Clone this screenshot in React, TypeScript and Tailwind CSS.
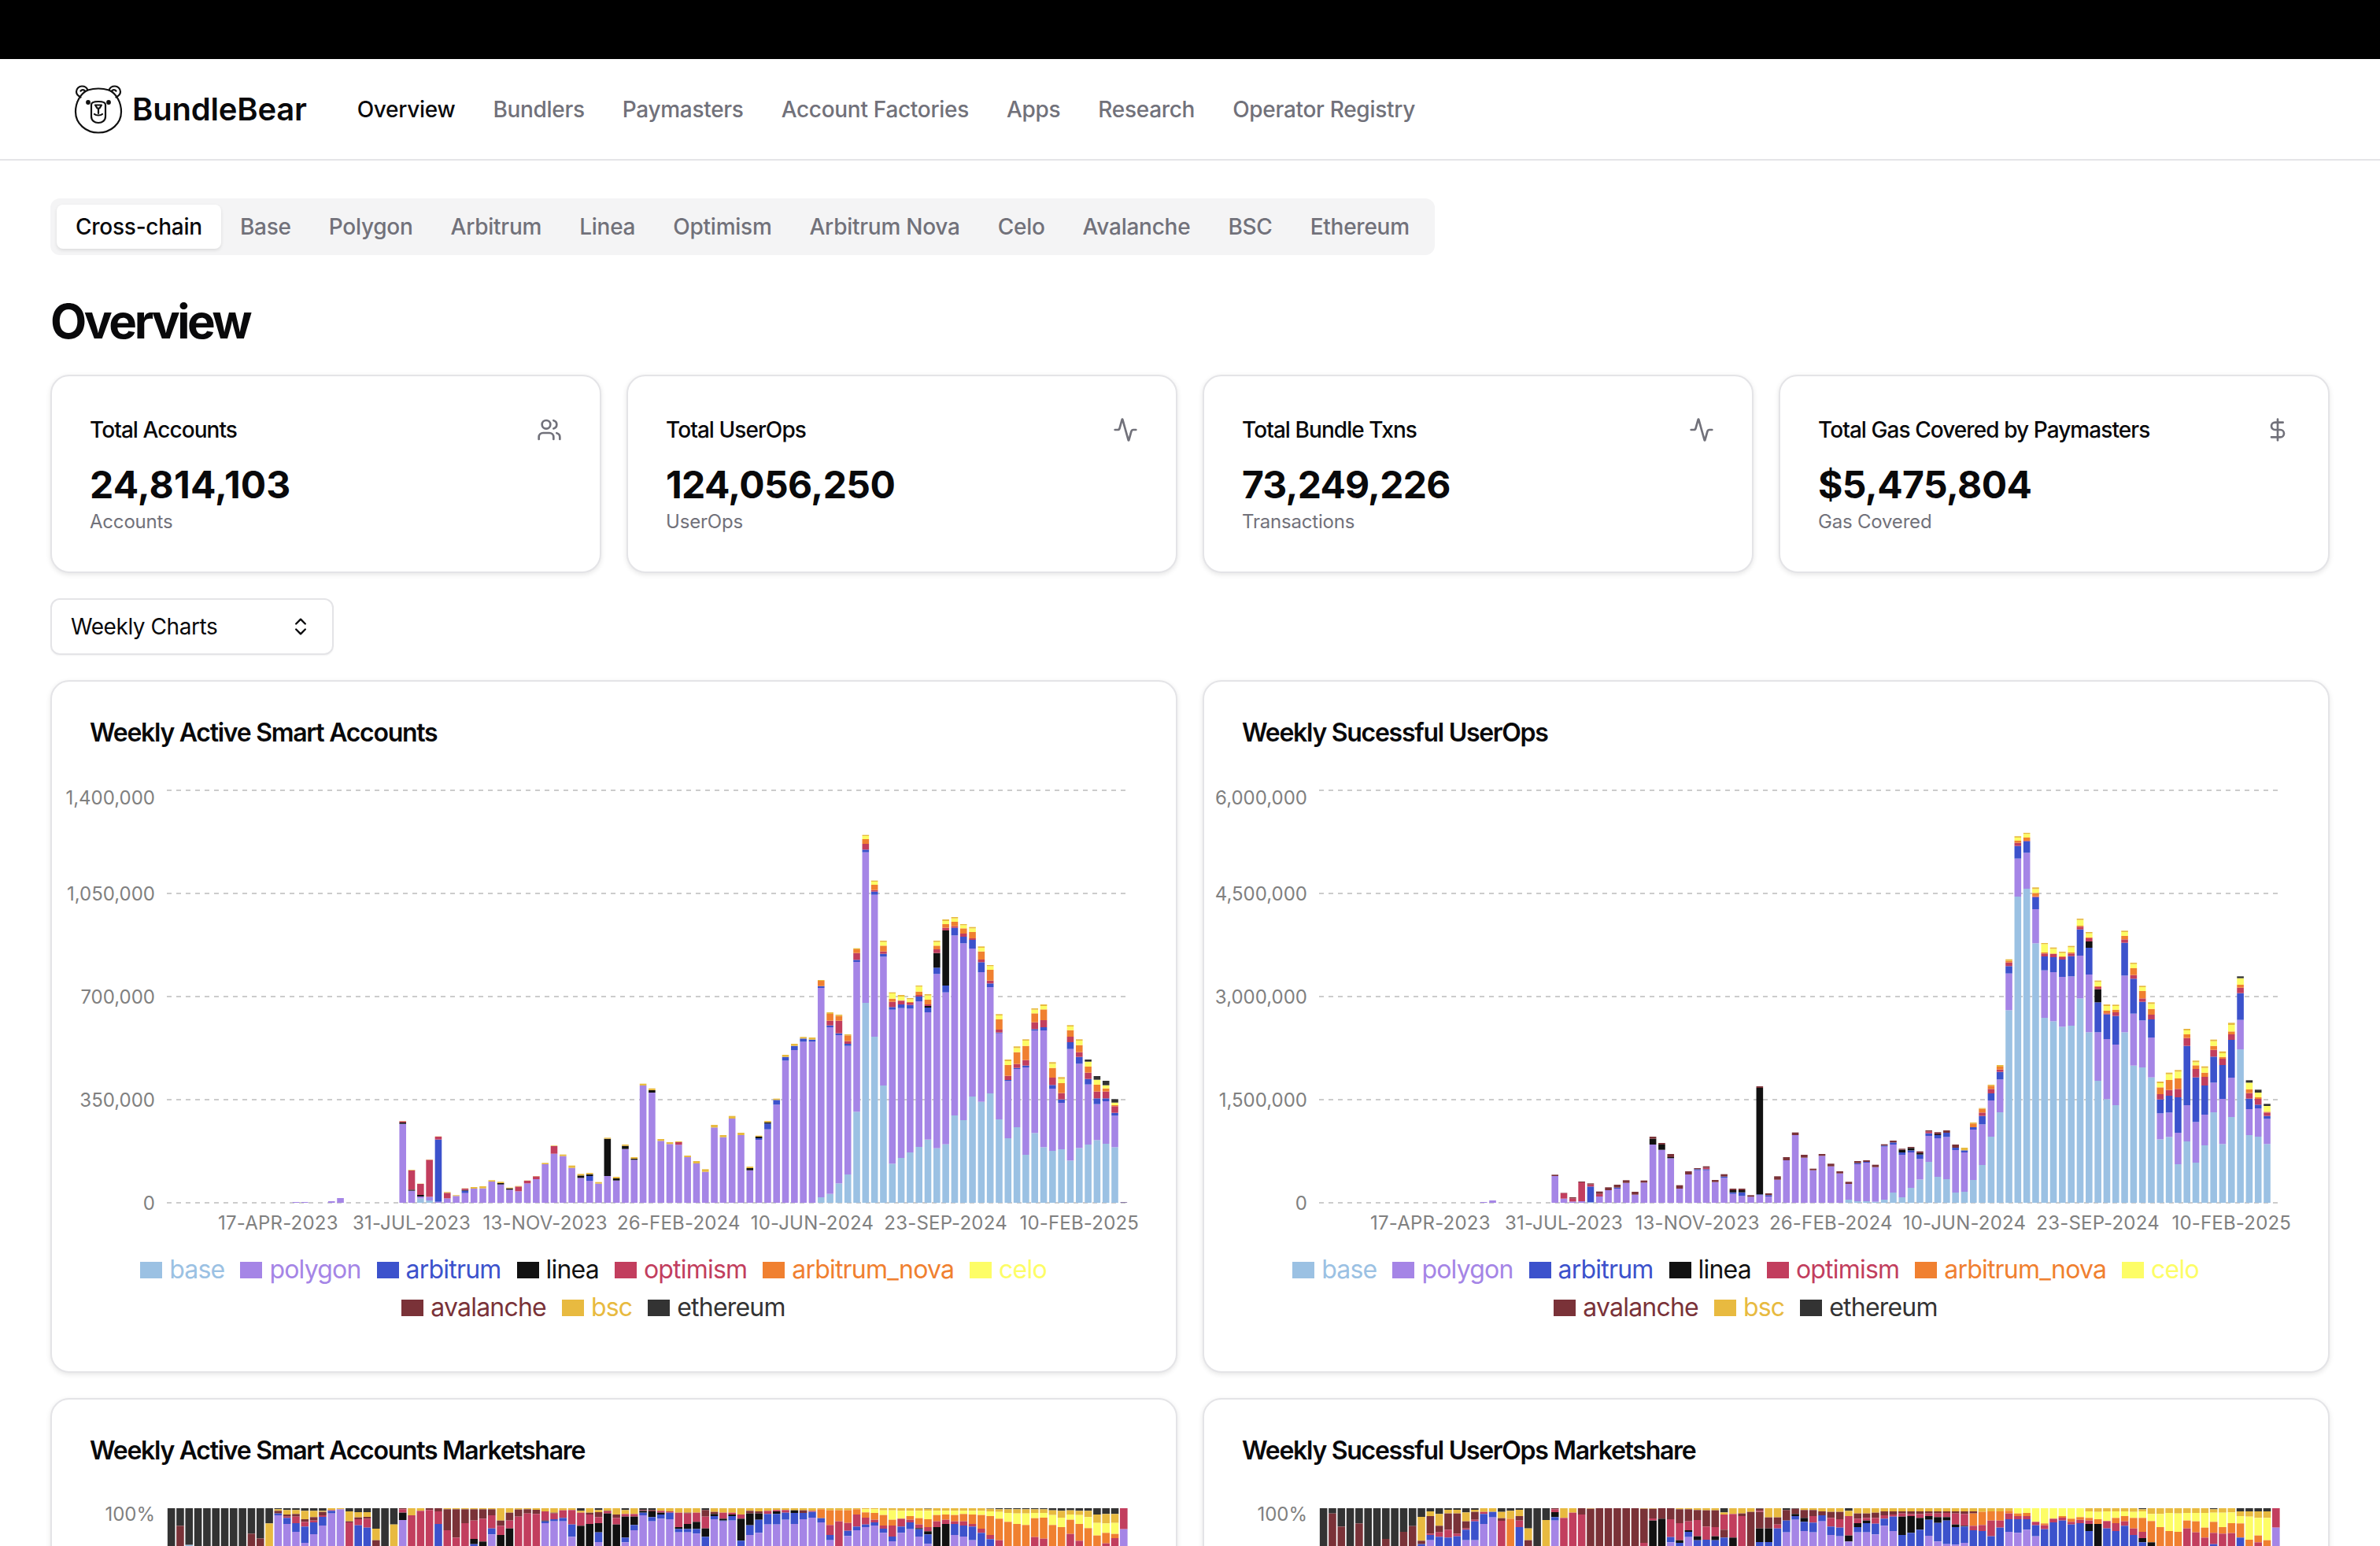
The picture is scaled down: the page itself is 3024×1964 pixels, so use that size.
import React from 'react';
import { Users, Activity, DollarSign, ChevronsUpDown } from 'lucide-react';

const COLORS: Record<string, string> = {
  b: '#9bc1e3',
  p: '#a585e6',
  a: '#3c52cc',
  l: '#111111',
  o: '#c23e5e',
  n: '#f08030',
  c: '#fdfd66',
  v: '#7a3238',
  s: '#e8ba40',
  e: '#333333',
};

const LEGEND = [
  [['base', 'b'], ['polygon', 'p'], ['arbitrum', 'a'], ['linea', 'l'], ['optimism', 'o'], ['arbitrum_nova', 'n'], ['celo', 'c']],
  [['avalanche', 'v'], ['bsc', 's'], ['ethereum', 'e']],
];

const navItems = ['Overview', 'Bundlers', 'Paymasters', 'Account Factories', 'Apps', 'Research', 'Operator Registry'];
const chains = ['Cross-chain', 'Base', 'Polygon', 'Arbitrum', 'Linea', 'Optimism', 'Arbitrum Nova', 'Celo', 'Avalanche', 'BSC', 'Ethereum'];
const xLabels = ['17-APR-2023', '31-JUL-2023', '13-NOV-2023', '26-FEB-2024', '10-JUN-2024', '23-SEP-2024', '10-FEB-2025'];

const stats = [
  { title: 'Total Accounts', value: '24,814,103', sub: 'Accounts', icon: Users, tracking: 'tracking-[0.2px]' },
  { title: 'Total UserOps', value: '124,056,250', sub: 'UserOps', icon: Activity, tracking: 'tracking-[-0.6px]' },
  { title: 'Total Bundle Txns', value: '73,249,226', sub: 'Transactions', icon: Activity, tracking: 'tracking-[-0.8px]' },
  { title: 'Total Gas Covered by Paymasters', value: '$5,475,804', sub: 'Gas Covered', icon: DollarSign, tracking: 'tracking-[-0.6px]' },
];

// rows are tops read off the chart: [poly, top], [poly, linea, top], or [base, poly, arb, linea, opt, nova, celo, top]. 0 = no segment
const accounts: number[][] = [
  [0,1163,0,1158,1153,0,0,1152],[0,1418,0,1414,1340,0,0,1338],[1447,1440,0,1434,1392,0,0,1391],[1455,1441,0,0,1300,0,0,1299],
  [0,1460,1223,0,1212,0,0,1211],[0,1447,0,0,1426,0,0,1423],[1438,1435],[0,1427,1418,1415,1410,0,0,1409],
  [1410,1404],[1409,1401],[1383,1378],[1394,1389,1384],[1414,1409,1406],[0,1420,0,0,1402,0,0,1400],[0,1390,0,0,1380,0,0,1379],
  [0,1374,0,0,1363,0,0,1362],[1317,1312],[0,1277,0,0,1248,0,0,1246],[1286,1280],[1331,1322],[1369,1360,1354],
  [0,1380,1362,1355,0,0,0,1350],[1391,1385],[1362,1220,1216],[1379,1371,1365],[1259,1247,1242],[1300,1296,1290],
  [1017,1010],[1044,1035,1028],[1228,1221],[1240,1233],[0,1243,0,0,1233,0,0,1230],[1290,1284],[1314,1305],[1346,1336],
  [1177,1167],[1214,1206],[1143,1133],[1206,1197],[1340,1332,1326],[0,1224,1218,1212,0,0,0,1208],[0,1184,1162,1157,0,0,0,1152],
  [0,1090,1072,0,0,0,0,1067],[0,922,908,0,0,0,0,900],[0,882,866,0,0,0,0,858],[0,850,838,0,0,0,0,832],[0,850,842,0,0,0,0,834],
  [1443,645,638,0,0,618,0,615],[1430,795,788,0,770,744,0,738],[1390,825,818,0,770,752,0,747],[1356,866,858,0,848,826,0,822],
  [1117,546,538,0,512,498,0,494],[702,128,118,0,96,78,66,62],[831,290,278,0,272,252,240,236],[1017,526,515,0,506,484,470,465],
  [1315,728,718,0,698,686,666,662],[1293,722,708,0,694,692,678,672],[1272,724,710,0,702,698,688,684],[1251,696,678,0,672,659,640,636],
  [1223,738,720,714,708,690,674,669],[1256,592,568,512,498,484,470,465],[1241,662,636,426,416,402,390,384],[1131,445,416,0,410,393,380,375],
  [1149,475,450,0,438,418,406,402],[1059,495,462,0,456,432,418,413],[1079,585,547,0,537,506,492,487],[1047,642,628,0,617,576,562,558],
  [1146,818,815,0,804,765,750,745],[1218,1000,996,0,980,939,924,918],[1176,954,950,0,935,890,874,868],[1281,948,941,0,920,866,846,841],
  [1198,808,802,0,776,742,728,723],[1252,807,795,0,768,727,714,708],[1266,1029,1015,0,987,950,934,928],[1260,1083,1070,0,1046,1008,992,985],
  [1303,878,852,0,831,806,792,787],[1255,934,908,0,890,863,846,841],[1242,1013,992,0,968,945,926,918],[1225,1088,1066,0,1040,1014,995,981],
  [1239,1077,1066,0,1040,1028,1016,999],[1252,1132,1121,0,1096,1092,1082,1069],[1462,1461],
];

const userOps: number[][] = [
  [1362,1357],[0,1448,0,0,1427,0,0,1426],[0,1459,0,0,1447,0,0,1443],[0,1458,0,0,1386,0,0,1383],[1462,0,1402,0,1394,0,0,1390],
  [0,1440,0,0,1430,0,0,1421],[1416,1405],[0,1410,1406,0,0,0,0,1395],[1388,1378],[1433,1422],[1387,1379],[1242,1220,1212],[1262,1242,1236],
  [1294,1290,1278],[1410,1397],[1356,1344],[0,1340,1336,0,0,0,0,1332],[0,1340,1336,0,1330,0,0,1325],[1385,1377],[0,1369,1364,0,0,0,0,1355],
  [0,1430,1424,1416,0,0,0,1410],[0,1438,1424,1416,0,0,0,1410],[1441,1435],[0,1435,1432,1026,0,0,0,1020],[0,1440,1435,0,0,0,0,1428],
  [1376,1363],[1302,1290],[1206,1196],[1292,1281],[1340,1334],[1285,1278],[1325,1315],[1352,1344],[1452,1392,0,0,0,0,0,1384],
  [1458,1317,1313,0,0,0,0,1305],[1458,1311,1308,0,0,0,0,1302],[1460,1328,0,0,0,0,0,1319],[1452,1250,1246,0,0,0,0,1241],[1425,1242,1234,0,0,0,0,1227],
  [1443,1281,1272,1262,0,0,0,1258],[1407,1272,1264,1255,0,0,0,1251],[1375,1297,1280,1275,0,0,0,1268],[1308,1209,1199,0,1192,0,0,1188],
  [1365,1218,1206,1203,0,0,0,1195],[1374,1213,1197,0,0,0,0,1188],[1425,1263,1254,0,0,0,0,1242],[1422,1272,1264,0,0,0,0,1254],
  [1377,1185,1176,0,0,1162,0,1158],[1320,1165,1133,0,1120,1106,0,1103],[1212,1074,1047,0,1030,1018,0,1014],[1119,994,965,0,956,945,0,939],
  [730,590,562,0,548,542,0,536],[297,152,104,0,92,84,72,67],[267,130,86,0,84,72,58,54],[475,345,299,0,296,283,268,262],
  [759,578,525,0,514,510,478,474],[772,585,528,0,516,514,496,491],[793,603,537,0,528,525,512,507],[789,601,524,0,514,510,490,485],
  [685,522,422,0,412,408,386,381],[814,594,492,468,456,452,437,432],[999,814,700,650,642,638,622,617],[1069,840,746,0,742,732,714,708],
  [1092,861,752,0,738,728,714,709],[814,598,473,0,460,447,432,427],[941,743,610,0,596,570,554,549],[948,769,698,0,685,657,642,637],
  [986,834,765,0,747,725,706,700],[1222,1123,1070,0,1050,1024,1008,1002],[1213,1120,1056,0,1034,996,974,968],[1317,1197,1062,0,1030,990,964,958],
  [1230,1092,866,0,836,822,807,801],[1311,1156,986,0,954,940,928,922],[1245,1128,1017,0,984,968,950,944],[1119,1006,907,0,881,866,848,842],
  [1240,1068,939,0,915,908,894,887],[1137,987,843,0,822,811,786,778],[879,767,665,0,644,633,608,601],[1206,1107,1067,0,1046,1032,1006,997],
  [1212,1104,1090,0,1068,1062,1044,1033],[1240,1144,1133,0,1120,1117,1095,1087],
];

// top-down segments of the marketshare columns: colour letter + y where it ends (48..192 in crop units)
const share1 = [
  'e','e115v','e188b','e','e','e','e','e','e','e145v','e163v','e106s','e52s58v68a75p','e55s72v80o85a108p','e55s70v80o105a138p','e58s90v100o118a180p',
  'e58s82v95o102a147p','e58s62v75o81a114p','s55o58a68p','s52p','e60s98v102o','e63s83v90o113a','e63s81v88o122a','e126s170v','e','e110s',
  'v52o65l93p','s75o','s58o','v55o','v60o108a','s52v132o','s52v160o','s52v105o','s52v95o165l185a','s52v88o175l','s52v75o125a148p','s95v115o150l',
  's65v95o125l','s53v80o','s52v68o','s54v70o','s60o95l98a105p','s65v68o90a98p','s56o85a98p','s55o110a157p','e58s65o115l','s65v72o108l',
  'e55s63v82o105l140a177p','s58v60o68l','s72v85o110l','e55s70o80l160a178p','s70o80l112a132p','e55o58l65a75p','e55v60l82a98p','s58o65l72a88p','s60o65a90p',
  's65o120l127a140p','s65v68o108l127a140p','s65o100l127a145p','e55v80o125l157a','s62v70l78a90p','s65o88l95a98p','s65o72l78a95p','s72o88l172a',
  's58v68l113a150p','s60v68l92a142p','s58o70a110p','s55o60l70a110p','s55o65a92p','s56l66a108p','s56v66a90p','s58o62a84p','s52n86a102p','s56n112o150a170p',
  's56n98o','s56n104o134a154p','s52n72o118a132p','s52c64n84o110a120p','s52c66n92o102a114p','s56c74n114o126a142p','s56c92n114o156a174p','s58c88o118a142p',
  's58c78n92o102a128p','s58c86n110o124l128a156p','e50s58c90n120o136l148a184p','s58c74n98o120l','s58c72n92o108l','s58c74n98o108a150p','s58c70n98o114a156p',
  's58c72n108o118a170p','s58c74n126o142a','e50s60c78n150o166a','e52s62c88n170o','e52s66c100n','e52s68c108n','e52s68c112n','e52s66c86n158o','e52s66c84n164o',
  'e56s74c112n','e58s84c120n','e56s72c92n146o','e58s74c108n172o','e58s82c124n','e72s104c152n','e70s106c142n182o','e70s104c146n162o','o128p',
];

const share2 = [
  'e','e68v','e118v','e','e106v','e','e','e165v','e','e138v','e116v','e81s172v185a','e60s78v145o150a170p','e70s115v140o157a','e54s68v130o160a','e54s68v145o155a',
  'e64s98v125o130a170p','e54s62v92o98a170p','s62o70a108p','s62a83p','e62s86v96o','e58s88n','e54s78v95o120a','e125s170v','e','e93s','v52o63l82a95p','s85o','s65o',
  'v72o','s50v','v','v','v','v','v','s50v180o','s50v87o95l','v88l','v90o158a178p','s52v105o170l180a','s52v98o132l138a158p','s55v93o155l170a','s56v118o168a','s56v120o155l170a',
  'e64s72o130v160a','s70o160l','s68v78o','s62v','e50v58o62v125l177a','s83v125l177a','s83v110o125a','e55v95a140p','e50v70l78a92p','s55v85l100a135p','s55v78o103a140p',
  's60v75a98p','s62v85o118a150p','s62v90o122a155p','e58s78o152l175p','s68v88o105l120a140p','s68v85o95l105a140p','s65v85o107a148p','s60v75o88a115p','s60v72o80a135p',
  's60v68o80l150a','s60v70o78l142a','s60v70o85l130a','s60v68o78l92a153p','s60v68o82l104a175p','s60v66o82l95a185p','s60v68o110l120a187p','s60v70o115l118a180p',
  's60v68n115o132a','s62n112o135a','s60n95o155a','s60n95o122a','s58n68o90a138p','c68n78o90a142p','c66n78o90a130p','c100o113a155p','c106n113o128a','c88o102a','c78n84o95a',
  'c88n100o110a','c82n92o105a','s60c85n95o108l135a','s62c90n108l','s60c97o125a','s60c85n105o135a','s60c78n98o115a','s62c85n125o150a','e52s60c85n138o162l178a','s70c97n178l',
  's70c120n','s66c135n','s68c138n','s66c95n125o','s66c98n140o','s66c122n160o','e52s65c100n142o185a','s65c120n145o','s64c105n143o','e60s78c106n160a','e60s80c168n','e60s85c152n178o',
  'e60s85c170n','o122p',
];

const BAND = 11.31;
const BAR = 8.6;
const X0 = 146;
const CARD_W = 1428;

function stackRects(row: number[], i: number, tailLetter: (i: number) => string) {
  let cols: number[];
  if (row.length === 2) cols = [0, row[0], 0, 0, 0, 0, 0, row[1]];
  else if (row.length === 3) cols = [0, row[0], 0, row[1], 0, 0, 0, row[2]];
  else cols = row;
  const letters = ['b', 'p', 'a', 'l', 'o', 'n', 'c', tailLetter(i)];
  const x = X0 + (i + 0.5) * BAND - BAR / 2;
  let prev = 1464;
  const rects: React.ReactNode[] = [];
  cols.forEach((top, k) => {
    if (!top) return;
    const y = 62 + top / 3;
    const h = (prev - top) / 3;
    rects.push(<rect key={`${i}-${k}`} x={x} y={y} width={BAR} height={h} fill={COLORS[letters[k]]} />);
    prev = top;
  });
  return rects;
}

function Legend() {
  return (
    <div className="mt-[11px] w-[1376px] -ml-[48px] text-[32px] leading-[48px] tracking-[-0.8px]">
      {LEGEND.map((row, r) => (
        <div key={r} className="flex justify-center gap-[20px]">
          {row.map(([name, c]) => (
            <div key={name} className="flex items-center gap-[9px]" style={{ color: COLORS[c] }}>
              <span className="w-[28px] h-[21px]" style={{ background: COLORS[c] }} />
              <span>{name}</span>
            </div>
          ))}
        </div>
      ))}
    </div>
  );
}

function BarChart({ title, yTicks, rows, tail, small }: { title: string; yTicks: string[]; rows: number[][]; tail: (i: number) => string; small: [number, number][] }) {
  return (
    <div className="bg-white border-2 border-[#e4e4e7] rounded-3xl p-12 shadow-[0_2px_6px_rgba(0,0,0,0.1)] h-[880px]">
      <h3 className="pt-[1px] text-[32px] leading-8 font-semibold tracking-[-1.27px] text-[#09090b]">{title}</h3>
      <svg className="block -ml-12 mt-[31px]" width={CARD_W} height={600}>
        {yTicks.map((t, i) => {
          const y = 26 + i * 131;
          return (
            <g key={t}>
              <line x1={X0} x2={X0 + 1219} y1={y} y2={y} stroke="#cccccc" strokeWidth={2} strokeDasharray="6 6" />
              <text x={131} y={y + (i === 0 ? 18 : 9)} textAnchor="end" fontSize={24} fill="#808080">{t}</text>
            </g>
          );
        })}
        {small.map(([i, h]) => (
          <rect key={i} x={X0 + (i + 0.5) * BAND - BAR / 2} y={550 - h} width={BAR} height={h} fill={COLORS.p} />
        ))}
        {rows.map((row, n) => stackRects(row, n + 26, tail))}
        {xLabels.map((l, i) => (
          <text key={l} x={X0 + (12.5 + i * 15) * BAND} y={584} textAnchor="middle" fontSize={24} letterSpacing={0.2} fill="#808080">{l}</text>
        ))}
      </svg>
      <Legend />
    </div>
  );
}

function ShareChart({ title, cols }: { title: string; cols: string[] }) {
  return (
    <div className="bg-white border-2 border-[#e4e4e7] rounded-3xl p-12 shadow-[0_2px_6px_rgba(0,0,0,0.1)] h-[880px]">
      <h3 className="pt-[1px] text-[32px] leading-8 font-semibold tracking-[-1.27px] text-[#09090b]">{title}</h3>
      <svg className="block -ml-12 mt-[31px]" width={CARD_W} height={100}>
        <text x={131} y={42} textAnchor="end" fontSize={24} fill="#808080">100%</text>
        {cols.map((col, i) => {
          const x = X0 + (i + 0.5) * BAND - BAR / 2 - 0.5;
          let start = 48;
          return Array.from(col.matchAll(/([a-z])(\d*)/g)).map((m, k) => {
            const end = m[2] ? Number(m[2]) : 192;
            const rect = <rect key={`${i}-${k}`} x={x} y={26 + (start - 48) / 3} width={BAR + 1} height={(end - start) / 3} fill={COLORS[m[1]]} />;
            start = end;
            return rect;
          });
        })}
      </svg>
    </div>
  );
}

function BearLogo() {
  return (
    <svg width={62} height={62} viewBox="0 0 62 62" fill="none" stroke="#111" strokeWidth={2.2} strokeLinecap="round" strokeLinejoin="round">
      <path d="M8.5 15.5C5.5 14 3 11.5 3 8.5 3 4.5 6.5 1.5 10 1.5c3.5 0 6.5 2 7.5 5" />
      <path d="M53.5 15.5c3-1.5 5.5-4 5.5-7 0-4-3.5-7-7-7-3.5 0-6.5 2-7.5 5" />
      <path d="M8.5 7.5C10 5.5 13 5.5 14.5 8" />
      <path d="M53.5 7.5C52 5.5 49 5.5 47.5 8" />
      <path d="M17.5 6.5C26 4 36 4 44.5 6.5C54 11 60 22 60 34 60 49 47 60.5 31 60.5S2 49 2 34C2 22 8 11 17.5 6.5Z" />
      <circle cx={18} cy={22} r={1.8} fill="#111" />
      <circle cx={44} cy={22} r={1.8} fill="#111" />
      <path d="M22 25c0-3 3-4 9-4s9 1 9 4v15c0 5-4 8-9 8s-9-3-9-8Z" />
      <path d="M27 25.5h8l-2.5 4h-3Z" />
      <path d="M31 30v6M26 37c2 2 8 2 10 0" />
    </svg>
  );
}

export default function App() {
  return (
    <div className="h-[1964px] overflow-hidden bg-white font-['Inter',sans-serif] text-[#09090b]">
      <div className="h-[75px] bg-black" />
      <header className="h-[129px] border-b-2 border-[#e4e4e7] flex items-center pl-[94px]">
        <div className="flex items-center gap-3 mr-[64px]">
          <BearLogo />
          <span className="text-[40px] font-semibold tracking-[-0.2px]">BundleBear</span>
        </div>
        <nav className="flex gap-12 text-[28px] font-medium tracking-[-0.3px]">
          {navItems.map((n, i) => (
            <span key={n} className={i === 0 ? 'text-[#09090b]' : 'text-[#71717a]'}>{n}</span>
          ))}
        </nav>
      </header>
      <main className="px-16 pt-12">
        <div className="inline-flex h-[72px] items-center rounded-xl bg-[#f4f4f5] p-2 text-[28px] font-medium tracking-[-0.25px] text-[#71717a]">
          {chains.map((c, i) => (
            <span
              key={c}
              className={
                i === 0
                  ? 'h-14 flex items-center rounded-lg bg-white px-6 text-[#09090b] shadow-[0_2px_4px_rgba(0,0,0,0.1)]'
                  : 'h-14 flex items-center px-6'
              }
            >
              {c}
            </span>
          ))}
        </div>
        <h2 className="mt-12 mb-8 text-[60px] leading-[72px] font-bold tracking-[-3.4px]">Overview</h2>
        <div className="grid grid-cols-4 gap-8">
          {stats.map((s) => {
            const Icon = s.icon;
            return (
              <div key={s.title} className="bg-white border-2 border-[#e4e4e7] rounded-3xl p-12 pb-[47px] shadow-[0_2px_6px_rgba(0,0,0,0.1)]">
                <div className="flex items-center justify-between pb-[18px]">
                  <span className="text-[28px] leading-10 font-medium tracking-[-0.93px]">{s.title}</span>
                  <Icon size={32} strokeWidth={2} className="text-[#71717a]" />
                </div>
                <div className={`text-[48px] leading-[63px] font-bold ${s.tracking}`}>{s.value}</div>
                <div className="text-[24px] leading-8 tracking-[-0.2px] text-[#71717a]">{s.sub}</div>
              </div>
            );
          })}
        </div>
        <div className="mt-8 w-[360px] h-[72px] flex items-center justify-between border-2 border-[#e4e4e7] rounded-xl pl-6 pr-[26px] text-[28px] tracking-[-0.45px] shadow-[0_1px_2px_rgba(0,0,0,0.05)]">
          <span>Weekly Charts</span>
          <ChevronsUpDown size={28} strokeWidth={2} />
        </div>
        <div className="mt-8 grid grid-cols-2 gap-8">
          <BarChart
            title="Weekly Active Smart Accounts"
            yTicks={['1,400,000', '1,050,000', '700,000', '350,000', '0']}
            rows={accounts}
            tail={(i) => (i >= 103 ? 'e' : 's')}
            small={[[18, 2], [19, 6], [14, 1], [15, 1]]}
          />
          <BarChart
            title="Weekly Sucessful UserOps"
            yTicks={['6,000,000', '4,500,000', '3,000,000', '1,500,000', '0']}
            rows={userOps}
            tail={(i) => (i < 72 ? 'v' : i >= 103 ? 'e' : 's')}
            small={[[18, 1], [19, 3]]}
          />
          <ShareChart title="Weekly Active Smart Accounts Marketshare" cols={share1} />
          <ShareChart title="Weekly Sucessful UserOps Marketshare" cols={share2} />
        </div>
      </main>
    </div>
  );
}
